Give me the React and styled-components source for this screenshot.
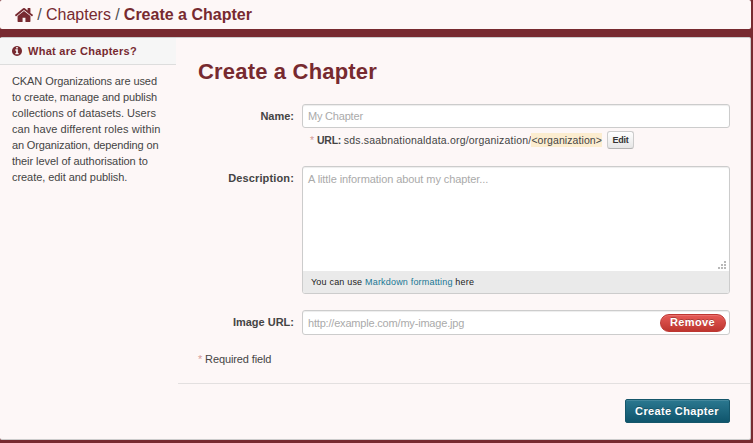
import React from 'react';
import styled, { createGlobalStyle } from 'styled-components';

const GlobalStyle = createGlobalStyle`
  * { box-sizing: border-box; }
  body {
    margin: 0;
    background: #772a30;
    color: #444;
    font: 11px/16px "Liberation Sans", Arial, sans-serif;
    overflow: hidden;
  }
`;

const Page = styled.div`
  width: 753px;
  height: 443px;
  display: flex;
  flex-direction: column;
  gap: 8px;
  padding-right: 2px;
`;

const Toolbar = styled.nav`
  height: 29px;
  flex: none;
  display: flex;
  align-items: center;
  gap: 4.25px;
  padding: 0 0 0 15px;
  background: #fdf7f7;
  border-radius: 2px;
  color: #772a30;
  font-size: 16px;
  line-height: 20px;
  white-space: nowrap;
`;

const HomeIcon = styled.svg`
  width: 18px;
  height: 14px;
  fill: #772a30;
`;

const Separator = styled.span`
  color: #505050;
`;

const Crumb = styled.span`
  font-weight: ${(p) => (p.$active ? 'bold' : 'normal')};
`;

const Wrapper = styled.main`
  height: 403px;
  flex: none;
  display: grid;
  grid-template-columns: 176px 1fr;
  background: #fdf7f7;
  border: solid #ccc;
  border-width: 1px 1px 1px 0;
  border-radius: 2px;
`;

const Sidebar = styled.aside`
  padding-right: 0;
`;

const SideHeading = styled.h2`
  margin: 0;
  height: 27px;
  display: flex;
  align-items: center;
  gap: 6px;
  padding-left: 12px;
  background: #f6f6f6;
  border-bottom: 1px solid #ddd;
  color: #772a30;
  font-size: 11px;
  line-height: 16px;
  letter-spacing: 0.28px;
`;

const InfoIcon = styled.svg`
  width: 10px;
  height: 10px;
  fill: #772a30;
`;

const SideText = styled.p`
  margin: 8px 0 0 12px;
  white-space: nowrap;
`;

const Line = styled.span`
  display: block;
  letter-spacing: ${(p) => p.$spacing || '0'};
`;

const Content = styled.section`
  padding-left: 2px;
`;

const FormBody = styled.div`
  height: 346px;
  padding: 20px 20px 0 20px;
  border-bottom: 1px solid #e3e0e0;
`;

const Title = styled.h1`
  margin: 0 0 19px;
  color: #772a30;
  font-size: 22px;
  line-height: 27px;
  letter-spacing: 0.18px;
`;

const Field = styled.div`
  display: grid;
  grid-template-columns: 96px 428px;
  column-gap: 8px;
  margin-bottom: ${(p) => p.$gap}px;
`;

const Label = styled.label`
  padding-top: 4px;
  font-weight: bold;
  text-align: right;
  white-space: nowrap;
  letter-spacing: ${(p) => p.$spacing || '0'};
`;

const InputBox = styled.div`
  height: ${(p) => p.$height || 24}px;
  display: flex;
  align-items: center;
  justify-content: space-between;
  padding: 0 3px 0 5px;
  background: #fff;
  border: 1px solid #ccc;
  border-radius: 3px;
  box-shadow: inset 0 1px 1px rgba(0, 0, 0, 0.075);
  color: #aaa;
`;

const Placeholder = styled.span`
  letter-spacing: ${(p) => p.$spacing || '0'};
`;

const Slug = styled.div`
  height: 18px;
  margin: 3px 0 0 8px;
  display: flex;
  align-items: center;
  font-size: 10.5px;
  line-height: 14px;
  white-space: pre;
`;

const SlugLabel = styled.b`
  letter-spacing: -0.25px;
`;

const SlugPath = styled.span`
  letter-spacing: 0.19px;
`;

const Asterisk = styled.span`
  color: #d49c98;
`;

const Highlight = styled.span`
  background: #fcedd0;
  letter-spacing: 0.08px;
`;

const EditButton = styled.button`
  width: 27px;
  height: 18px;
  margin: 0 0 0 5px;
  padding: 0;
  border: 1px solid #ccc;
  border-bottom-color: #b3b3b3;
  border-radius: 3px;
  background: linear-gradient(#fff, #e6e6e6);
  color: #333;
  font: bold 9px/14px "Liberation Sans", Arial, sans-serif;
  letter-spacing: -0.25px;
`;

const Editor = styled.div`
  height: 128px;
  display: flex;
  flex-direction: column;
  background: #fff;
  border: 1px solid #ccc;
  border-radius: 3px;
  box-shadow: inset 0 1px 1px rgba(0, 0, 0, 0.075);
  overflow: hidden;
`;

const EditorArea = styled.div`
  flex: 1;
  display: flex;
  justify-content: space-between;
  padding: 4px 3px 2px 5px;
  color: #aaa;
`;

const Grip = styled.svg`
  width: 8px;
  height: 8px;
  align-self: flex-end;
  fill: #b8b8b8;
`;

const EditorHelp = styled.div`
  height: 22px;
  padding: 3px 8px;
  background: #eaeaea;
  color: #222;
  font-size: 9px;
  line-height: 16px;
  letter-spacing: 0.19px;
`;

const Link = styled.a`
  color: #187794;
`;

const RemoveButton = styled.button`
  width: 66px;
  height: 18px;
  padding: 0 1px 0 0;
  border: 1px solid #bd3631;
  border-radius: 9px;
  background: linear-gradient(#e65a56, #bd362f);
  box-shadow: inset 0 1px 0 rgba(255, 255, 255, 0.15);
  color: #fff;
  font: bold 11px/15px "Liberation Sans", Arial, sans-serif;
  letter-spacing: 0.35px;
  text-shadow: 0 -1px 0 rgba(0, 0, 0, 0.25);
`;

const Required = styled.p`
  margin: 0;
  letter-spacing: -0.12px;
`;

const Actions = styled.div`
  display: flex;
  justify-content: flex-end;
  padding: 15px 20px 0 0;
`;

const SubmitButton = styled.button`
  width: 105px;
  height: 24px;
  padding: 0 1px 0 0;
  border: 1px solid #15566a;
  border-radius: 2px;
  background: linear-gradient(#2b7890, #0f556c);
  box-shadow: inset 0 1px 0 rgba(255, 255, 255, 0.12);
  color: #fff;
  font: bold 11px/20px "Liberation Sans", Arial, sans-serif;
  letter-spacing: 0.35px;
  text-shadow: 0 -1px 0 rgba(0, 0, 0, 0.25);
`;

const sideLines = [
  ['CKAN Organizations are used', '-0.09px'],
  ['to create, manage and publish', '-0.1px'],
  ['collections of datasets. Users', '0.03px'],
  ['can have different roles within', '0.1px'],
  ['an Organization, depending on', '-0.14px'],
  ['their level of authorisation to', '-0.06px'],
  ['create, edit and publish.', '-0.06px'],
];

const gripDots = [[6, 0], [3, 3], [6, 3], [0, 6], [3, 6], [6, 6]];

export default function App() {
  return (
    <>
      <GlobalStyle />
      <Page>
        <Toolbar>
          <HomeIcon viewBox="26 245 1612 1291" preserveAspectRatio="none">
            <path d="M1408 992v480q0 26-19 45t-45 19H960v-384H704v384H320q-26 0-45-19t-19-45V992q0-1 .5-3t.5-3l575-474 575 474q1 2 1 6zm223-69l-62 74q-8 9-21 11h-3q-13 0-21-7L832 424 140 1001q-12 8-24 7-13-2-21-11l-62-74q-8-10-7-23.500t11-21.500l719-599q32-26 76-26t76 26l244 204V288q0-14 9-23t23-9h192q14 0 23 9t9 23v408l219 182q10 8 11 21.500t-7 23.500z" />
          </HomeIcon>
          <Separator>/</Separator>
          <Crumb>Chapters</Crumb>
          <Separator>/</Separator>
          <Crumb $active>Create a Chapter</Crumb>
        </Toolbar>
        <Wrapper>
          <Sidebar>
            <SideHeading>
              <InfoIcon viewBox="0 128 1536 1536">
                <path d="M1024 1376v-160q0-14-9-23t-23-9h-96V672q0-14-9-23t-23-9H544q-14 0-23 9t-9 23v160q0 14 9 23t23 9h96v320h-96q-14 0-23 9t-9 23v160q0 14 9 23t23 9h448q14 0 23-9t9-23zM896 480V320q0-14-9-23t-23-9H672q-14 0-23 9t-9 23v160q0 14 9 23t23 9h192q14 0 23-9t9-23zm640 416q0 209-103 385.500T1153.500 1561 768 1664t-385.500-103T103 1281.500 0 896t103-385.500T382.500 231 768 128t385.500 103T1433 510.500 1536 896z" />
              </InfoIcon>
              What are Chapters?
            </SideHeading>
            <SideText>
              {sideLines.map(([line, spacing]) => (
                <Line key={line} $spacing={spacing}>{line}</Line>
              ))}
            </SideText>
          </Sidebar>
          <Content>
            <FormBody>
              <Title>Create a Chapter</Title>
              <Field $gap={17}>
                <Label>Name:</Label>
                <div>
                  <InputBox><Placeholder $spacing="-0.2px">My Chapter</Placeholder></InputBox>
                  <Slug>
                    <Asterisk>* </Asterisk>
                    <SlugLabel>URL: </SlugLabel>
                    <SlugPath>sds.saabnationaldata.org/organization/</SlugPath>
                    <Highlight>&lt;organization&gt;</Highlight>
                    <EditButton>Edit</EditButton>
                  </Slug>
                </div>
              </Field>
              <Field $gap={16}>
                <Label $spacing="0.14px">Description:</Label>
                <Editor>
                  <EditorArea>
                    <Placeholder $spacing="-0.08px">A little information about my chapter...</Placeholder>
                    <Grip viewBox="0 0 8 8">
                      {gripDots.map(([x, y]) => (
                        <rect key={`${x}-${y}`} x={x} y={y} width="2" height="2" />
                      ))}
                    </Grip>
                  </EditorArea>
                  <EditorHelp>
                    You can use <Link>Markdown formatting</Link> here
                  </EditorHelp>
                </Editor>
              </Field>
              <Field $gap={16}>
                <Label>Image URL:</Label>
                <InputBox $height={25}>
                  <Placeholder $spacing="-0.19px">http://example.com/my-image.jpg</Placeholder>
                  <RemoveButton>Remove</RemoveButton>
                </InputBox>
              </Field>
              <Required><Asterisk>*</Asterisk> Required field</Required>
            </FormBody>
            <Actions>
              <SubmitButton>Create Chapter</SubmitButton>
            </Actions>
          </Content>
        </Wrapper>
      </Page>
    </>
  );
}
